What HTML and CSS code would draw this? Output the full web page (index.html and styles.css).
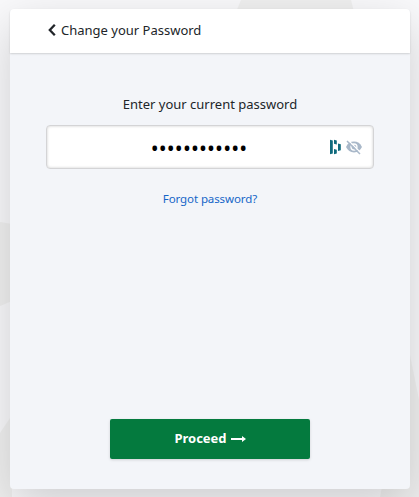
FILE: index.html
```html
<!DOCTYPE html>
<html lang="en">
<head>
  <meta charset="UTF-8">
  <meta name="viewport" content="width=device-width, initial-scale=1.0">
  <title>Change your Password</title>
  <link rel="stylesheet" href="styles.css">
</head>
<body>
  <!-- Background shapes -->
  <svg class="backdrop" viewBox="0 0 419 497" aria-hidden="true">
    <path d="M241 0h110l3 12H236z"/>
    <path d="M0 222l12 2v77L0 306z"/>
    <path d="M0 433l12-18v82H0z"/>
    <path d="M408 345l11 55v97H380z"/>
  </svg>

  <main class="card">
    <header class="card-header">
      <a href="#" class="back" aria-label="Back">
        <svg width="8" height="12" viewBox="0 0 8 12"><path d="M6.800 .8L1.800 6l5 5.200"/></svg>
      </a>
      <h1>Change your Password</h1>
    </header>

    <form class="card-body">
      <label for="current-password">Enter your current password</label>
      <div class="password-field">
        <input type="password" id="current-password" value="abcdefghijkl">
        <div class="field-icons">
          <svg class="manager-icon" width="11" height="16" viewBox="0 0 11 16">
            <path d="M0 .8l2.800.7v13L0 15.200zM4 .8l2.800.7v4L4 4.800zM4 10l2.800.7v3.800L4 15.200zM8 4.500l2.800.7v6L8 12z"/>
          </svg>
          <svg class="eye-icon" width="18" height="16" viewBox="0 0 18 16">
            <path class="eye" d="M1 8c1.700-3.600 4.500-5.400 8-5.400s6.300 1.800 8 5.400c-1.700 3.600-4.500 5.400-8 5.400S2.700 11.600 1 8z"/>
            <circle class="ring" cx="9" cy="8" r="3"/>
            <path class="slash-gap" d="M3 1l13 13"/>
            <path class="slash" d="M2 2l13 13"/>
          </svg>
        </div>
      </div>
      <a href="#" class="forgot">Forgot password?</a>
      <button type="button" class="proceed">
        Proceed
        <svg width="15" height="9" viewBox="0 0 15 9"><path d="M0 4h11V2l4 3-4 3V6H0z"/></svg>
      </button>
    </form>
  </main>
</body>
</html>
```

FILE: styles.css
```css
:root {
  --page-bg: #f9f9fb;
  --card-bg: #f3f5f9;
  --text-color: #212529;
  --link-color: #1565c8;
  --green: #047a3e;
}

* {
  box-sizing: border-box;
}

body {
  margin: 0;
  padding: 9px 9px 8px 10px;
  height: 497px;
  overflow: hidden;
  background-color: var(--page-bg);
  color: var(--text-color);
  font-family: "Noto Sans", sans-serif;
  font-size: 13px;
}

.backdrop {
  position: absolute;
  top: 0;
  left: 0;
  width: 419px;
  height: 497px;
  fill: #f0f0f0;
}

.card {
  position: relative;
  display: flex;
  flex-direction: column;
  height: 480px;
  border-radius: 4px;
  background-color: var(--card-bg);
  box-shadow: 0 16px 48px rgba(0, 0, 0, 0.175);
}

.card-header {
  display: flex;
  align-items: center;
  gap: 5px;
  height: 44px;
  padding: 0 38px 2px;
  border-radius: 4px 4px 0 0;
  background-color: #fff;
  box-shadow: 0 1px 2px rgba(0, 0, 0, 0.15);
}

.back {
  display: flex;
}

.back path {
  fill: none;
  stroke: var(--text-color);
  stroke-width: 2.3;
}

h1 {
  margin: 0;
  font-size: 13px;
  font-weight: 400;
}

.card-body {
  flex: 1;
  display: flex;
  flex-direction: column;
  align-items: center;
  padding: 41px 36px 30px;
}

label {
  line-height: 20px;
}

.password-field {
  display: flex;
  align-items: center;
  width: 328px;
  height: 44px;
  margin-top: 11px;
  padding: 0 10px 0 11px;
  border: 1px solid #d4d4d6;
  border-radius: 4px;
  background-color: #fff;
  box-shadow: inset 0 0 3px rgba(0, 0, 0, 0.2);
}

input {
  flex: 1;
  min-width: 0;
  padding: 1px 0 0 10px;
  border: none;
  outline: none;
  background: transparent;
  color: #000;
  font-family: "Noto Sans", sans-serif;
  font-size: 21px;
  letter-spacing: 0.15px;
  text-align: center;
}

.field-icons {
  display: flex;
  align-items: center;
  gap: 4px;
}

.manager-icon {
  fill: #0e6a7c;
}

.eye {
  fill: #a9b8c9;
}

.ring {
  fill: none;
  stroke: #fff;
  stroke-width: 1.3;
}

.slash {
  stroke: #a9b8c9;
  stroke-width: 1.5;
}

.slash-gap {
  stroke: #fff;
  stroke-width: 1.3;
}

.forgot {
  margin-top: 21px;
  color: var(--link-color);
  font-size: 11.5px;
  line-height: 18px;
  letter-spacing: -0.1px;
  text-decoration: none;
}

.proceed {
  display: flex;
  align-items: center;
  justify-content: center;
  gap: 4px;
  width: 200px;
  height: 40px;
  margin-top: auto;
  padding: 0 0 2px;
  border: none;
  border-radius: 2px;
  background-color: var(--green);
  color: #fff;
  font-family: "Noto Sans", sans-serif;
  font-size: 13px;
  font-weight: 700;
  box-shadow: 0 1px 3px rgba(0, 0, 0, 0.15);
  cursor: pointer;
}

.proceed svg {
  fill: #fff;
}
```
